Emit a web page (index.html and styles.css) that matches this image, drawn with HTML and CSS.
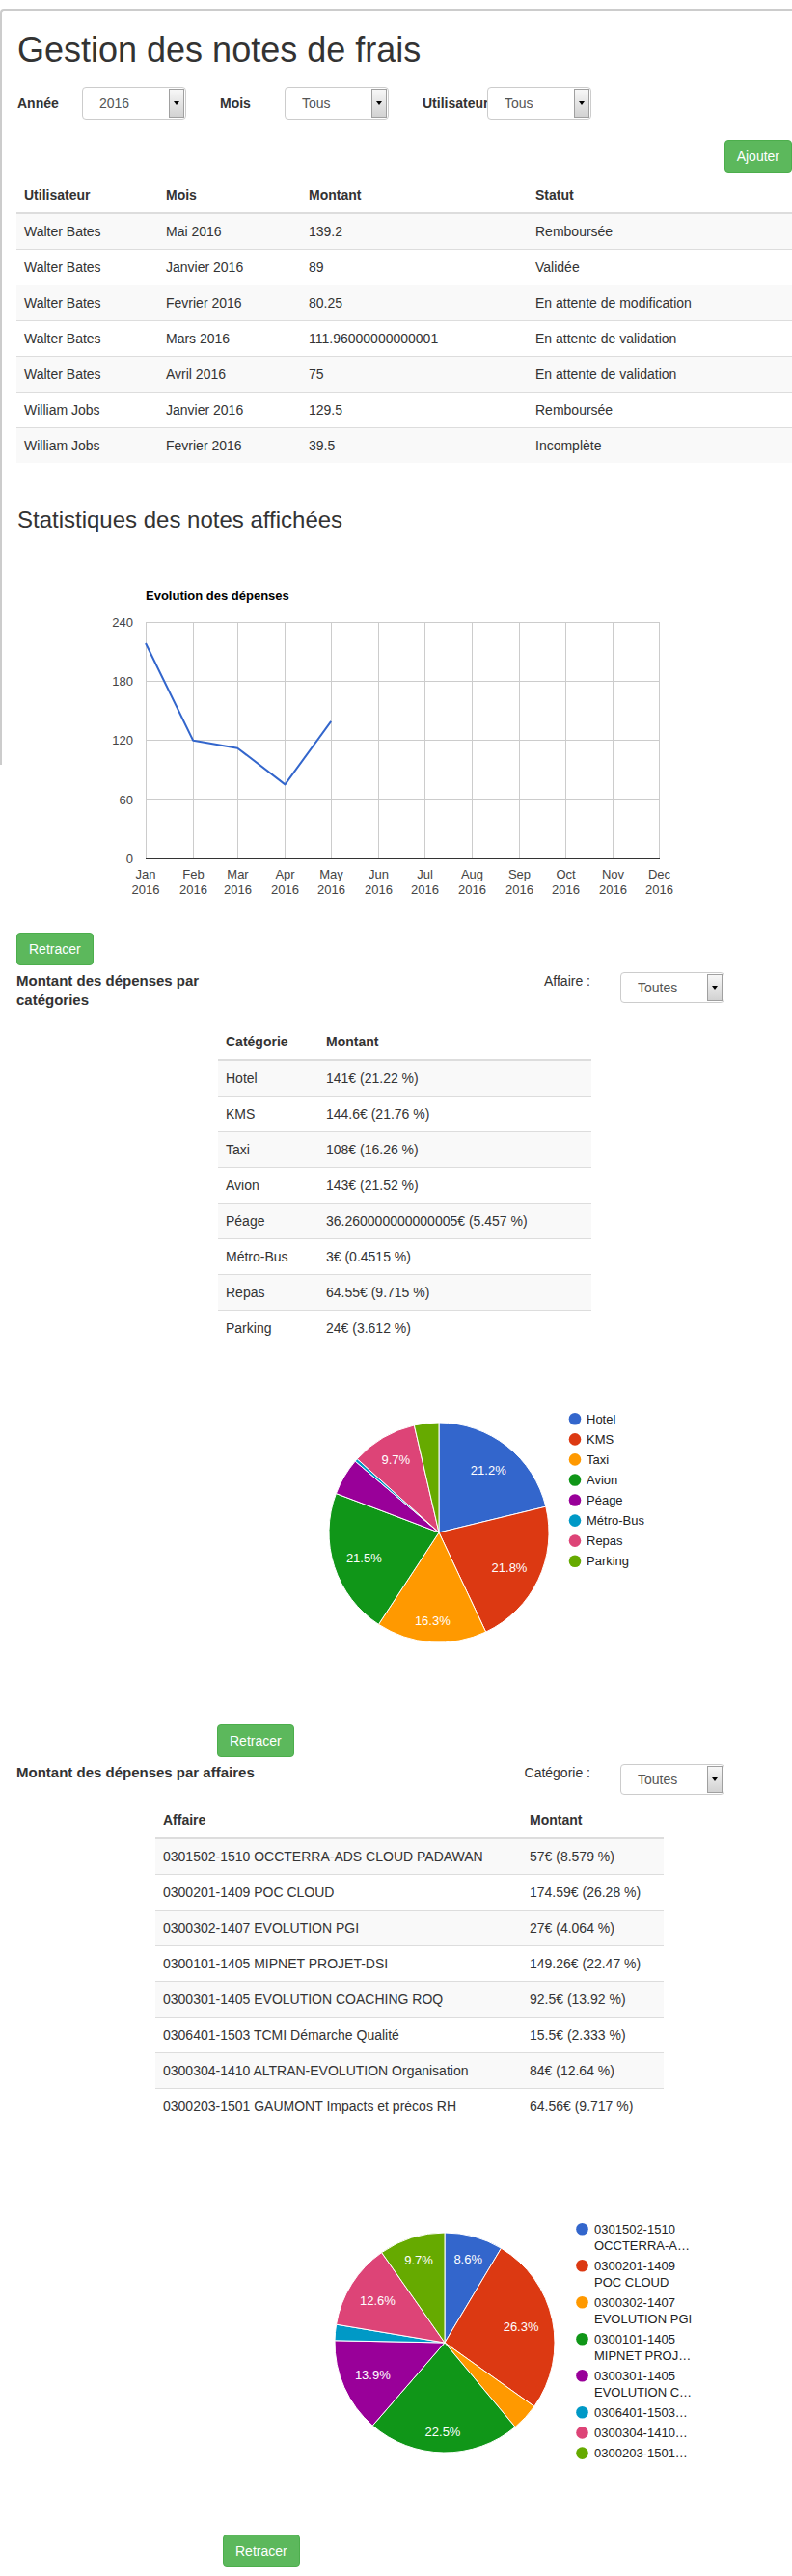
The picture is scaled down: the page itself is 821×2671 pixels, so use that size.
FILE: index.html
```html
<!DOCTYPE html>
<html lang="fr">
<head>
<meta charset="utf-8">
<title>Gestion des notes de frais</title>
<link rel="stylesheet" href="styles.css">
</head>
<body>
<div class="page">
  <h1 class="title">Gestion des notes de frais</h1>

  <div class="filters">
    <span class="flabel">Année</span>
    <div class="select"><span class="val">2016</span><span class="arrow"></span></div>
    <span class="flabel gap">Mois</span>
    <div class="select"><span class="val">Tous</span><span class="arrow"></span></div>
    <span class="flabel gap">Utilisateur</span>
    <div class="select"><span class="val">Tous</span><span class="arrow"></span></div>
  </div>

  <div class="actions"><button class="btn">Ajouter</button></div>

  <table class="table notes">
    <colgroup><col class="c1"><col class="c2"><col class="c3"><col></colgroup>
    <thead><tr><th>Utilisateur</th><th>Mois</th><th>Montant</th><th>Statut</th></tr></thead>
    <tbody>
      <tr><td>Walter Bates</td><td>Mai 2016</td><td>139.2</td><td>Remboursée</td></tr>
      <tr><td>Walter Bates</td><td>Janvier 2016</td><td>89</td><td>Validée</td></tr>
      <tr><td>Walter Bates</td><td>Fevrier 2016</td><td>80.25</td><td>En attente de modification</td></tr>
      <tr><td>Walter Bates</td><td>Mars 2016</td><td>111.96000000000001</td><td>En attente de validation</td></tr>
      <tr><td>Walter Bates</td><td>Avril 2016</td><td>75</td><td>En attente de validation</td></tr>
      <tr><td>William Jobs</td><td>Janvier 2016</td><td>129.5</td><td>Remboursée</td></tr>
      <tr><td>William Jobs</td><td>Fevrier 2016</td><td>39.5</td><td>Incomplète</td></tr>
    </tbody>
  </table>

  <h3 class="subtitle">Statistiques des notes affichées</h3>

  <svg class="chart linechart" width="804" height="415" viewBox="0 0 804 415">
    <g transform="translate(-17 -553)">
      <text x="151" y="622.5" class="ct-title">Evolution des dépenses</text>
      <g class="grid">
        <line x1="151" y1="646.5" x2="684" y2="646.5"/>
        <line x1="151" y1="707.5" x2="684" y2="707.5"/>
        <line x1="151" y1="768.5" x2="684" y2="768.5"/>
        <line x1="151" y1="829.5" x2="684" y2="829.5"/>
        <line x1="151.5" y1="646" x2="151.5" y2="891"/>
        <line x1="200.5" y1="646" x2="200.5" y2="891"/>
        <line x1="246.5" y1="646" x2="246.5" y2="891"/>
        <line x1="295.5" y1="646" x2="295.5" y2="891"/>
        <line x1="343.5" y1="646" x2="343.5" y2="891"/>
        <line x1="392.5" y1="646" x2="392.5" y2="891"/>
        <line x1="440.5" y1="646" x2="440.5" y2="891"/>
        <line x1="489.5" y1="646" x2="489.5" y2="891"/>
        <line x1="538.5" y1="646" x2="538.5" y2="891"/>
        <line x1="586.5" y1="646" x2="586.5" y2="891"/>
        <line x1="635.5" y1="646" x2="635.5" y2="891"/>
        <line x1="683.5" y1="646" x2="683.5" y2="891"/>
      </g>
      <line class="baseline" x1="151" y1="891.5" x2="684" y2="891.5"/>
      <polyline class="series" points="151,668 200.2,768.8 246.3,776.7 295.5,814.4 343.2,748.9"/>
      <g class="ylab">
        <text x="138" y="651">240</text>
        <text x="138" y="712">180</text>
        <text x="138" y="773">120</text>
        <text x="138" y="834.5">60</text>
        <text x="138" y="895.5">0</text>
      </g>
      <g class="xlab">
        <text x="151" y="911.5">Jan</text><text x="151" y="928">2016</text>
        <text x="200.5" y="911.5">Feb</text><text x="200.5" y="928">2016</text>
        <text x="246.5" y="911.5">Mar</text><text x="246.5" y="928">2016</text>
        <text x="295.5" y="911.5">Apr</text><text x="295.5" y="928">2016</text>
        <text x="343.5" y="911.5">May</text><text x="343.5" y="928">2016</text>
        <text x="392.5" y="911.5">Jun</text><text x="392.5" y="928">2016</text>
        <text x="440.5" y="911.5">Jul</text><text x="440.5" y="928">2016</text>
        <text x="489.5" y="911.5">Aug</text><text x="489.5" y="928">2016</text>
        <text x="538.5" y="911.5">Sep</text><text x="538.5" y="928">2016</text>
        <text x="586.5" y="911.5">Oct</text><text x="586.5" y="928">2016</text>
        <text x="635.5" y="911.5">Nov</text><text x="635.5" y="928">2016</text>
        <text x="683.5" y="911.5">Dec</text><text x="683.5" y="928">2016</text>
      </g>
    </g>
  </svg>

  <button class="btn retracer">Retracer</button>

  <div class="section-head">
    <div class="stitle narrow">Montant des dépenses par catégories</div>
    <div class="slabel">Affaire :</div>
    <div class="select small"><span class="val">Toutes</span><span class="arrow"></span></div>
  </div>

  <table class="table cat">
    <colgroup><col class="k1"><col></colgroup>
    <thead><tr><th>Catégorie</th><th>Montant</th></tr></thead>
    <tbody>
      <tr><td>Hotel</td><td>141€ (21.22 %)</td></tr>
      <tr><td>KMS</td><td>144.6€ (21.76 %)</td></tr>
      <tr><td>Taxi</td><td>108€ (16.26 %)</td></tr>
      <tr><td>Avion</td><td>143€ (21.52 %)</td></tr>
      <tr><td>Péage</td><td>36.260000000000005€ (5.457 %)</td></tr>
      <tr><td>Métro-Bus</td><td>3€ (0.4515 %)</td></tr>
      <tr><td>Repas</td><td>64.55€ (9.715 %)</td></tr>
      <tr><td>Parking</td><td>24€ (3.612 %)</td></tr>
    </tbody>
  </table>

  <svg class="chart pie1" width="804" height="393" viewBox="0 0 804 393">
    <g transform="translate(-17 -1397)">
      <g transform="translate(455 1591)" class="slices">
        <path fill="#3366cc" d="M0,0 L0,-114 A114,114 0 0 1 110.80,-26.81 Z"/>
        <path fill="#dc3912" d="M0,0 L110.80,-26.81 A114,114 0 0 1 48.63,103.11 Z"/>
        <path fill="#ff9900" d="M0,0 L48.63,103.11 A114,114 0 0 1 -62.54,95.32 Z"/>
        <path fill="#109618" d="M0,0 L-62.54,95.32 A114,114 0 0 1 -106.60,-40.39 Z"/>
        <path fill="#990099" d="M0,0 L-106.60,-40.39 A114,114 0 0 1 -86.82,-73.89 Z"/>
        <path fill="#0099c6" d="M0,0 L-86.82,-73.89 A114,114 0 0 1 -84.71,-76.30 Z"/>
        <path fill="#dd4477" d="M0,0 L-84.71,-76.30 A114,114 0 0 1 -25.64,-111.08 Z"/>
        <path fill="#66aa00" d="M0,0 L-25.64,-111.08 A114,114 0 0 1 0,-114 Z"/>
        <g class="plab">
          <text x="51.3" y="-60.4">21.2%</text>
          <text x="73" y="40.6">21.8%</text>
          <text x="-6.7" y="95.9">16.3%</text>
          <text x="-77.7" y="30.6">21.5%</text>
          <text x="-44.7" y="-71.1">9.7%</text>
        </g>
      </g>
      <g class="legend">
        <circle cx="596" cy="1473.3" r="6.3" fill="#3366cc"/><text x="608" y="1477.9">Hotel</text>
        <circle cx="596" cy="1494.4" r="6.3" fill="#dc3912"/><text x="608" y="1499">KMS</text>
        <circle cx="596" cy="1515.4" r="6.3" fill="#ff9900"/><text x="608" y="1520">Taxi</text>
        <circle cx="596" cy="1536.5" r="6.3" fill="#109618"/><text x="608" y="1541.1">Avion</text>
        <circle cx="596" cy="1557.5" r="6.3" fill="#990099"/><text x="608" y="1562.1">Péage</text>
        <circle cx="596" cy="1578.6" r="6.3" fill="#0099c6"/><text x="608" y="1583.2">Métro-Bus</text>
        <circle cx="596" cy="1599.6" r="6.3" fill="#dd4477"/><text x="608" y="1604.2">Repas</text>
        <circle cx="596" cy="1620.7" r="6.3" fill="#66aa00"/><text x="608" y="1625.3">Parking</text>
      </g>
    </g>
  </svg>

  <button class="btn retracer r2">Retracer</button>

  <div class="section-head">
    <div class="stitle">Montant des dépenses par affaires</div>
    <div class="slabel">Catégorie :</div>
    <div class="select small"><span class="val">Toutes</span><span class="arrow"></span></div>
  </div>

  <table class="table aff">
    <colgroup><col class="a1"><col></colgroup>
    <thead><tr><th>Affaire</th><th>Montant</th></tr></thead>
    <tbody>
      <tr><td>0301502-1510 OCCTERRA-ADS CLOUD PADAWAN</td><td>57€ (8.579 %)</td></tr>
      <tr><td>0300201-1409 POC CLOUD</td><td>174.59€ (26.28 %)</td></tr>
      <tr><td>0300302-1407 EVOLUTION PGI</td><td>27€ (4.064 %)</td></tr>
      <tr><td>0300101-1405 MIPNET PROJET-DSI</td><td>149.26€ (22.47 %)</td></tr>
      <tr><td>0300301-1405 EVOLUTION COACHING ROQ</td><td>92.5€ (13.92 %)</td></tr>
      <tr><td>0306401-1503 TCMI Démarche Qualité</td><td>15.5€ (2.333 %)</td></tr>
      <tr><td>0300304-1410 ALTRAN-EVOLUTION Organisation</td><td>84€ (12.64 %)</td></tr>
      <tr><td>0300203-1501 GAUMONT Impacts et précos RH</td><td>64.56€ (9.717 %)</td></tr>
    </tbody>
  </table>

  <svg class="chart pie2" width="804" height="426" viewBox="0 0 804 426">
    <g transform="translate(-17 -2205)">
      <g transform="translate(461 2432)" class="slices">
        <path fill="#3366cc" d="M0,0 L0,-114 A114,114 0 0 1 58.50,-97.84 Z"/>
        <path fill="#dc3912" d="M0,0 L58.50,-97.84 A114,114 0 0 1 92.83,66.17 Z"/>
        <path fill="#ff9900" d="M0,0 L92.83,66.17 A114,114 0 0 1 73.09,87.48 Z"/>
        <path fill="#109618" d="M0,0 L73.09,87.48 A114,114 0 0 1 -74.78,86.05 Z"/>
        <path fill="#990099" d="M0,0 L-74.78,86.05 A114,114 0 0 1 -113.98,-2.21 Z"/>
        <path fill="#0099c6" d="M0,0 L-113.98,-2.21 A114,114 0 0 1 -112.43,-18.83 Z"/>
        <path fill="#dd4477" d="M0,0 L-112.43,-18.83 A114,114 0 0 1 -65.36,-93.40 Z"/>
        <path fill="#66aa00" d="M0,0 L-65.36,-93.40 A114,114 0 0 1 0,-114 Z"/>
        <g class="plab">
          <text x="24.2" y="-81.7">8.6%</text>
          <text x="79.1" y="-11.7">26.3%</text>
          <text x="-2" y="96.9">22.5%</text>
          <text x="-74.7" y="38.3">13.9%</text>
          <text x="-69.6" y="-38.7">12.6%</text>
          <text x="-27" y="-80.7">9.7%</text>
        </g>
      </g>
      <g class="legend">
        <circle cx="603.5" cy="2314.3" r="6.3" fill="#3366cc"/><text x="616" y="2318.9">0301502-1510</text><text x="616" y="2336.2">OCCTERRA-A…</text>
        <circle cx="603.5" cy="2352.3" r="6.3" fill="#dc3912"/><text x="616" y="2356.9">0300201-1409</text><text x="616" y="2374">POC CLOUD</text>
        <circle cx="603.5" cy="2390.3" r="6.3" fill="#ff9900"/><text x="616" y="2394.9">0300302-1407</text><text x="616" y="2412">EVOLUTION PGI</text>
        <circle cx="603.5" cy="2428.3" r="6.3" fill="#109618"/><text x="616" y="2432.9">0300101-1405</text><text x="616" y="2450">MIPNET PROJ…</text>
        <circle cx="603.5" cy="2466.3" r="6.3" fill="#990099"/><text x="616" y="2470.9">0300301-1405</text><text x="616" y="2488">EVOLUTION C…</text>
        <circle cx="603.5" cy="2504.3" r="6.3" fill="#0099c6"/><text x="616" y="2508.9">0306401-1503…</text>
        <circle cx="603.5" cy="2525.4" r="6.3" fill="#dd4477"/><text x="616" y="2530">0300304-1410…</text>
        <circle cx="603.5" cy="2546.6" r="6.3" fill="#66aa00"/><text x="616" y="2551.2">0300203-1501…</text>
      </g>
    </g>
  </svg>

  <button class="btn retracer r3">Retracer</button>
</div>
</body>
</html>
```

FILE: styles.css
```css
html, body {
  margin: 0;
  padding: 0;
  background: #fff;
}

body {
  font-family: "Liberation Sans", Arial, Helvetica, sans-serif;
  font-size: 14px;
  line-height: 20px;
  color: #333;
}

.page {
  position: relative;
  display: flow-root;
  width: 821px;
  box-sizing: border-box;
  padding: 0 0 6px 17px;
}

/* decorative frame drawn over the top part of the page */
.page::before {
  content: "";
  position: absolute;
  top: 9px;
  left: 0;
  right: 0;
  height: 782px;
  border-top: 2px solid #cccccc;
  border-left: 2px solid #cccccc;
  border-top-left-radius: 4px;
  pointer-events: none;
}

.title {
  margin: 32px 0 0 1px;
  font-size: 36px;
  line-height: 40px;
  font-weight: 400;
  color: #333;
}

.filters {
  display: flex;
  align-items: center;
  margin-top: 18px;
  height: 34px;
}

.flabel {
  width: 68px;
  flex: none;
  font-weight: 700;
  padding-left: 1px;
  box-sizing: border-box;
  white-space: nowrap;
}

.flabel.gap {
  margin-left: 34px;
}

.select {
  display: flex;
  width: 108px;
  height: 34px;
  flex: none;
  box-sizing: border-box;
  border: 1px solid #cccccc;
  border-radius: 4px;
  background: #fff;
  color: #555;
  font-size: 14px;
}

.select.small {
  height: 32px;
  margin-top: 1px;
}

.select .val {
  flex: 1;
  padding-left: 17px;
  align-self: center;
}

.select .arrow {
  width: 14px;
  margin: 1px;
  border: 1px solid #a0a0a0;
  background: linear-gradient(#f7f7f7, #d2d2d2);
  display: flex;
  align-items: center;
  justify-content: center;
}

.select .arrow::after {
  content: "";
  width: 0;
  height: 0;
  border-left: 3px solid transparent;
  border-right: 3px solid transparent;
  border-top: 4px solid #000;
}

.actions {
  display: flex;
  justify-content: flex-end;
  margin-top: 21px;
}

.btn {
  display: block;
  font-family: inherit;
  font-size: 14px;
  line-height: 20px;
  padding: 6px 12px;
  border: 1px solid #4cae4c;
  border-radius: 4px;
  background: #5cb85c;
  color: #fff;
  margin: 0;
  cursor: pointer;
}

.table {
  border-collapse: collapse;
  border-spacing: 0;
  font-size: 14px;
  color: #333;
}

.table th {
  text-align: left;
  font-weight: 700;
  padding: 8px;
  line-height: 20px;
  vertical-align: bottom;
  border-bottom: 2px solid #dddddd;
}

.table td {
  padding: 8px;
  line-height: 20px;
  vertical-align: top;
  border-top: 1px solid #dddddd;
  white-space: nowrap;
}

.table tbody tr:nth-child(odd) td {
  background: #f9f9f9;
}

.notes {
  width: 804px;
  margin-top: 5px;
}

.notes .c1 { width: 147px; }
.notes .c2 { width: 148px; }
.notes .c3 { width: 235px; }

.subtitle {
  margin: 45px 0 0 1px;
  font-size: 24px;
  line-height: 27px;
  font-weight: 400;
  color: #333;
}

.chart {
  display: block;
}

.chart text {
  font-family: "Liberation Sans", Arial, Helvetica, sans-serif;
  font-size: 13px;
}

.ct-title {
  font-weight: 700;
  fill: #000;
}

.grid line {
  stroke: #cccccc;
  stroke-width: 1;
}

.baseline {
  stroke: #333333;
  stroke-width: 1;
}

.series {
  fill: none;
  stroke: #3366cc;
  stroke-width: 2;
  stroke-linejoin: round;
}

.ylab text {
  text-anchor: end;
  fill: #444;
}

.xlab text {
  text-anchor: middle;
  fill: #444;
}

.slices path {
  stroke: #ffffff;
  stroke-width: 1;
}

.plab text {
  fill: #ffffff;
  text-anchor: middle;
}

.legend text {
  fill: #222;
}

.section-head {
  display: flex;
  align-items: flex-start;
  margin-top: 6px;
  padding-right: 70px;
}

.stitle {
  flex: none;
  font-weight: 700;
  font-size: 15px;
  line-height: 20px;
}

.stitle.narrow {
  width: 200px;
}

.slabel {
  flex: 1;
  text-align: right;
  padding-right: 31px;
}

.cat {
  width: 387px;
  margin: 15px 0 0 209px;
}

.cat .k1 { width: 104px; }

.aff {
  width: 527px;
  margin: 8px 0 0 144px;
}

.aff .a1 { width: 380px; }

.r2 {
  margin-left: 208px;
}

.r3 {
  margin-left: 214px;
}
```
